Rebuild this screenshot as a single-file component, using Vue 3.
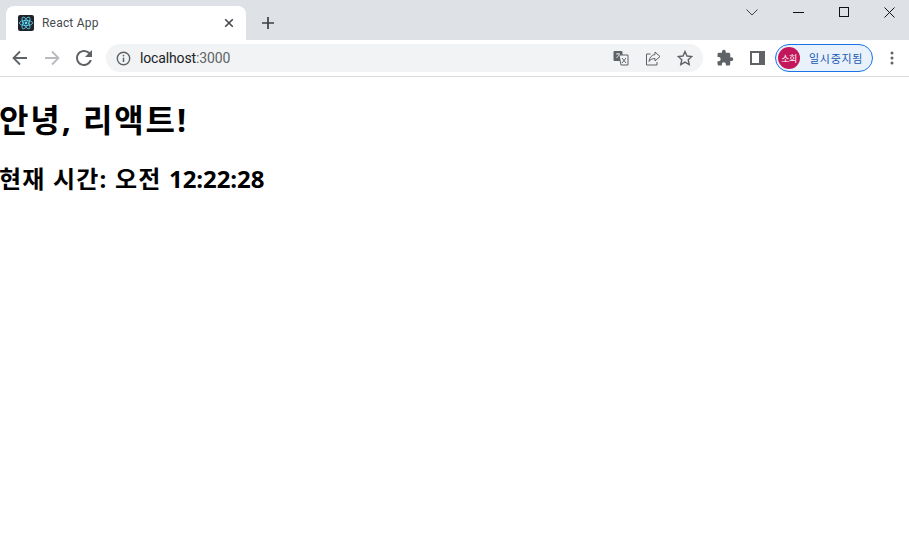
<script setup>
</script>

<template>
  <div class="page">
    <header class="chrome">
      <div class="tabstrip">
        <div class="tab">
          <svg class="favicon" width="16" height="16" viewBox="0 0 16 16">
            <rect width="16" height="16" rx="2" fill="#20232a" />
            <g fill="none" stroke="#61dafb" stroke-width="0.8">
              <ellipse cx="8" cy="8" rx="6.6" ry="2.6" />
              <ellipse cx="8" cy="8" rx="6.6" ry="2.6" transform="rotate(60 8 8)" />
              <ellipse cx="8" cy="8" rx="6.6" ry="2.6" transform="rotate(120 8 8)" />
            </g>
            <circle cx="8" cy="8" r="1.4" fill="#61dafb" />
          </svg>
          <span class="tab-title">React App</span>
          <svg class="tab-close" width="10" height="10" viewBox="0 0 10 10">
            <path d="M1.2 1.2 8.8 8.8M8.8 1.2 1.2 8.8" stroke="#45494d" stroke-width="1.6" fill="none" />
          </svg>
        </div>
        <svg class="newtab" width="12" height="12" viewBox="0 0 12 12">
          <path d="M6 0v12M0 6h12" stroke="#3c4043" stroke-width="1.7" fill="none" />
        </svg>
        <div class="window-controls">
          <svg class="win-chevron" width="12" height="7" viewBox="0 0 12 7">
            <path d="M.5.5 6 6 11.5.5" stroke="#3c4043" fill="none" />
          </svg>
          <svg class="win-min" width="11" height="1" viewBox="0 0 11 1">
            <path d="M0 .5h11" stroke="#111" fill="none" />
          </svg>
          <svg class="win-max" width="10" height="10" viewBox="0 0 10 10">
            <rect x=".5" y=".5" width="9" height="9" stroke="#111" fill="none" />
          </svg>
          <svg class="win-close" width="11" height="11" viewBox="0 0 11 11">
            <path d="M.5.5l10 10M10.500.5l-10 10" stroke="#111" fill="none" />
          </svg>
        </div>
      </div>
      <div class="toolbar">
        <svg class="nav" width="16" height="16" viewBox="0 0 16 16">
          <path d="M15 8H2M8 1.500 1.500 8 8 14.500" stroke="#5f6368" stroke-width="1.8" fill="none" />
        </svg>
        <svg class="nav" width="16" height="16" viewBox="0 0 16 16">
          <path d="M1 8h13M8 1.500 14.500 8 8 14.500" stroke="#b8babd" stroke-width="1.8" fill="none" />
        </svg>
        <svg class="nav" width="16" height="16" viewBox="4 4 16 16">
          <path d="M17.65 6.35C16.2 4.9 14.21 4 12 4c-4.42 0-7.99 3.58-7.99 8s3.57 8 7.99 8c3.73 0 6.84-2.55 7.73-6h-2.08c-.82 2.33-3.04 4-5.65 4-3.31 0-6-2.69-6-6s2.69-6 6-6c1.66 0 3.14.69 4.22 1.78L13 11h7V4l-2.35 2.35z" fill="#5f6368" />
        </svg>
        <div class="omnibox">
          <svg width="15" height="15" viewBox="0 0 15 15">
            <circle cx="7.500" cy="7.500" r="6.200" stroke="#5f6368" stroke-width="1.400" fill="none" />
            <path d="M7.500 6.700v4.300" stroke="#5f6368" stroke-width="1.500" />
            <circle cx="7.500" cy="4.600" r="0.900" fill="#5f6368" />
          </svg>
          <span class="url"><span class="host">localhost</span><span class="port">:3000</span></span>
          <div class="omni-actions">
            <svg width="16" height="16" viewBox="0 0 16 16">
              <rect x="0.500" y="1" width="9" height="10" rx="1" fill="#5f6368" />
              <path d="M6 5h9v10H8z" fill="#f1f3f4" stroke="#5f6368" />
              <path d="M9 8l4 5M13 8l-4 5" stroke="#5f6368" fill="none" />
              <path d="M3 4h4M5 3v1M3.500 8 6.500 4.500" stroke="#fff" fill="none" stroke-width=".8" />
            </svg>
            <svg width="16" height="15" viewBox="0 0 16 15">
              <path d="M10 1l5 4.500-5 4.500V7.500C6.500 7.500 5 9 4 10.500 4.500 6.500 6.500 4 10 3.500z" stroke="#5f6368" fill="none" />
              <path d="M5.500 3H1.500v11H12v-3" stroke="#5f6368" fill="none" />
            </svg>
            <svg width="16" height="16" viewBox="0 0 16 16">
              <path d="M8 1.500l2 4.500 4.800.5-3.600 3.200 1 4.800L8 12.100l-4.200 2.400 1-4.800L1.200 6.500 6 6z" stroke="#5f6368" stroke-width="1.400" fill="none" />
            </svg>
          </div>
        </div>
        <svg class="ext" width="18" height="18" viewBox="0 0 24 24">
          <path d="M20.500 11H19V7c0-1.100-.9-2-2-2h-4V3.500C13 2.120 11.880 1 10.500 1S8 2.120 8 3.500V5H4c-1.100 0-1.990.9-1.990 2v3.800H3.500c1.490 0 2.700 1.210 2.700 2.700s-1.210 2.700-2.700 2.700H2V20c0 1.100.9 2 2 2h3.800v-1.500c0-1.490 1.210-2.700 2.700-2.700 1.490 0 2.700 1.210 2.700 2.700V22H17c1.100 0 2-.9 2-2v-4h1.500c1.380 0 2.500-1.120 2.500-2.500S21.880 11 20.500 11z" fill="#5f6368" />
        </svg>
        <svg class="side" width="15" height="14" viewBox="0 0 15 14">
          <rect x="1" y="1" width="13" height="12" fill="#fff" stroke="#5f6368" stroke-width="2" />
          <rect x="9" y="1" width="5" height="12" fill="#5f6368" />
        </svg>
        <div class="profile">
          <span class="avatar">소희</span>
          <span class="paused">일시중지됨</span>
        </div>
        <svg class="menu" width="4" height="14" viewBox="0 0 4 14">
          <circle cx="2" cy="2" r="1.500" fill="#5f6368" />
          <circle cx="2" cy="7" r="1.500" fill="#5f6368" />
          <circle cx="2" cy="12" r="1.500" fill="#5f6368" />
        </svg>
      </div>
    </header>
    <main class="content">
      <h1>안녕, 리액트!</h1>
      <h2><span class="ko">현재 시간: 오전 </span><span class="time">12:22:28</span></h2>
    </main>
  </div>
</template>

<style>
html, body { margin: 0; background: #fff; }
</style>

<style scoped>
.page {
  width: 909px;
  height: 538px;
  overflow: hidden;
  background: #fff;
  font-family: "Open Sans", "Noto Sans CJK KR", sans-serif;
}
.chrome { border-bottom: 1px solid #dadce0; }
.tabstrip {
  height: 40px;
  background: #dee1e6;
  display: flex;
  align-items: flex-end;
  position: relative;
}
.tab {
  width: 240px;
  height: 34px;
  margin-left: 6px;
  background: #fff;
  border-radius: 8px 8px 0 0;
  display: flex;
  align-items: center;
  box-sizing: border-box;
  padding: 0 12px;
}
.tab-title {
  margin-left: 8px;
  font-size: 12px;
  letter-spacing: 0.2px;
  color: #45494d;
  flex: 1;
  font-family: "Roboto", "Noto Sans CJK KR", sans-serif;
}
.newtab { margin: 0 0 11px 16px; }
.window-controls {
  position: absolute;
  right: 0;
  top: 0;
  height: 24px;
  display: flex;
  align-items: center;
}
.win-chevron { margin-right: 35px; }
.win-min { margin-right: 35px; }
.win-max { margin-right: 35px; }
.win-close { margin-right: 14px; }
.toolbar {
  height: 36px;
  background: #fff;
  display: flex;
  align-items: center;
  padding-left: 12px;
}
.nav { margin-right: 16px; }
.omnibox {
  width: 597px;
  height: 28px;
  margin-left: -2px;
  background: #f1f3f4;
  border-radius: 14px;
  box-sizing: border-box;
  padding: 0 10px;
  display: flex;
  align-items: center;
}
.url {
  margin-left: 9px;
  font-size: 14px;
  letter-spacing: -0.14px;
  font-family: "Roboto", sans-serif;
  flex: 1;
}
.host { color: #202124; }
.port { color: #5f6368; }
.omni-actions {
  display: flex;
  align-items: center;
  gap: 16px;
}
.ext { margin-left: 13px; }
.side { margin-left: 16px; }
.profile {
  width: 98px;
  height: 28px;
  margin-left: 10px;
  box-sizing: border-box;
  border: 1px solid #1a73e8;
  border-radius: 14px;
  background: #e9f1fb;
  display: flex;
  align-items: center;
  padding-left: 2px;
}
.avatar {
  width: 22px;
  height: 22px;
  border-radius: 50%;
  background: #c2185b;
  color: #fff;
  font-size: 9px;
  display: flex;
  align-items: center;
  justify-content: center;
  letter-spacing: -0.5px;
}
.paused {
  margin-left: 9px;
  font-size: 11px;
  letter-spacing: 0.7px;
  color: #1558b0;
}
.menu { margin-left: 17px; }
.content { padding: 0; }
h1 {
  margin: 21px 0 0 -1px;
  font-size: 32px;
  line-height: 44px;
  font-weight: 700;
  letter-spacing: 1.9px;
  color: #000;
}
h2 {
  margin: 20px 0 0 -1px;
  font-size: 24px;
  line-height: 33px;
  font-weight: 700;
  color: #000;
}
.ko { letter-spacing: 1.2px; }
.time { letter-spacing: -0.1px; }
</style>
